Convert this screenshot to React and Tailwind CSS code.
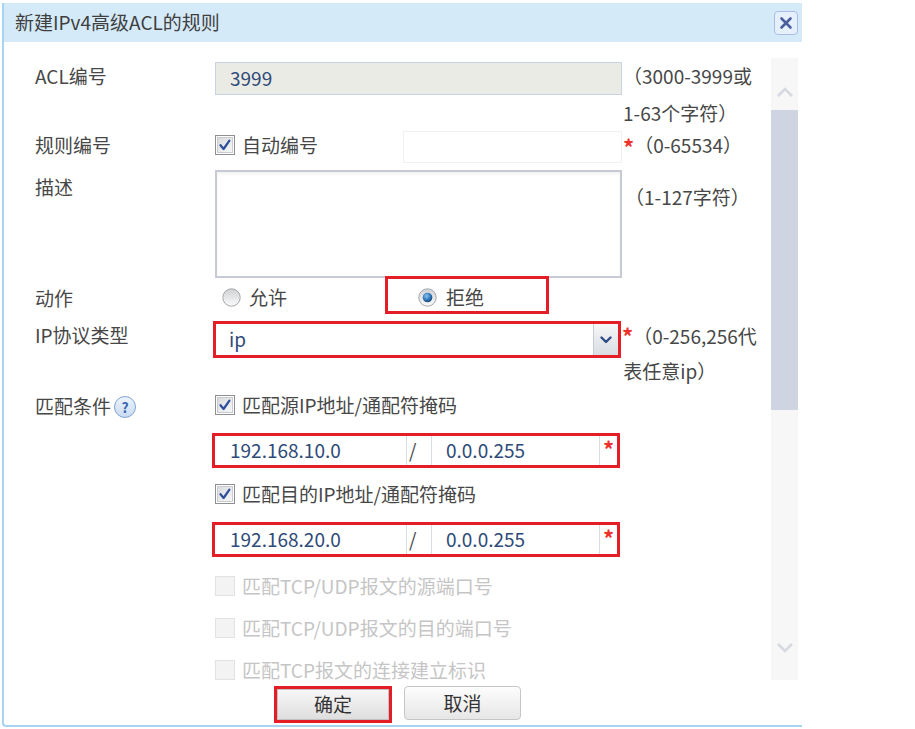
import React from "react";

const FONT = { fontFamily: '"Microsoft YaHei", "Noto Sans CJK SC", "Noto Sans", sans-serif' };

function CheckBox({ checked = false, disabled = false }) {
  if (disabled) {
    return (
      <span className="inline-block h-[20px] w-[20px] shrink-0 border border-[#e2e2e2] bg-[#f3f3f3]" />
    );
  }
  return (
    <svg width="20" height="20" viewBox="0 0 20 20" className="shrink-0">
      <defs>
        <linearGradient id="cbg" x1="0" y1="0" x2="1" y2="1">
          <stop offset="0" stopColor="#d9dadc" />
          <stop offset="1" stopColor="#f7f8f9" />
        </linearGradient>
      </defs>
      <rect x="0.5" y="0.5" width="19" height="19" fill="#fff" stroke="#8d8f92" />
      <rect x="2.5" y="2.5" width="15" height="15" fill="url(#cbg)" stroke="#c9cbce" />
      {checked && (
        <path d="M5.5 10.2 L8.6 14 L14.4 5.6" fill="none" stroke="#2f4f9a" strokeWidth="2.2" strokeLinecap="round" strokeLinejoin="round" />
      )}
    </svg>
  );
}

function Radio({ checked = false }) {
  return (
    <svg width="19" height="19" viewBox="0 0 19 19" className="shrink-0">
      <defs>
        <linearGradient id="rbg" x1="0" y1="0" x2="0" y2="1">
          <stop offset="0" stopColor="#cfd1d4" />
          <stop offset="1" stopColor="#fbfbfb" />
        </linearGradient>
        <radialGradient id="rdot" cx="0.4" cy="0.35" r="0.7">
          <stop offset="0" stopColor="#8cc3ee" />
          <stop offset="0.6" stopColor="#2c74b8" />
          <stop offset="1" stopColor="#1a3f6e" />
        </radialGradient>
      </defs>
      <circle cx="9.5" cy="9.5" r="8.7" fill="url(#rbg)" stroke="#a3a6aa" />
      {checked && <circle cx="9.5" cy="9.5" r="4.8" fill="url(#rdot)" />}
    </svg>
  );
}

function Star() {
  return <span className="text-[22px] font-bold leading-none text-[#f0302a]">*</span>;
}

function Label({ children, className = "" }) {
  return <div className={`w-[180px] shrink-0 text-[#474747] ${className}`}>{children}</div>;
}

function IpPair({ ip, mask }) {
  return (
    <div className="-ml-[3px] flex h-[35px] w-[408px] border-[3px] border-[#e51d26] bg-white">
      <div className="flex w-[192px] items-center border-r border-[#d7dce6] pl-[15px] text-[#2e4a78]">{ip}</div>
      <div className="flex w-[25px] items-start border-r border-[#d7dce6] pl-[2px] text-[#474747]">/</div>
      <div className="flex w-[168px] items-center border-r border-[#d7dce6] pl-[14px] text-[#2e4a78]">{mask}</div>
      <div className="flex flex-1 items-start justify-center pt-[1px]">
        <Star />
      </div>
    </div>
  );
}

function CheckRow({ text, checked, disabled, className = "" }) {
  return (
    <div className={`flex h-[30px] items-center pl-[180px] ${className}`}>
      <CheckBox checked={checked} disabled={disabled} />
      <span className={`ml-[7px] ${disabled ? "text-[#c5c5c5]" : "text-[#474747]"}`}>{text}</span>
    </div>
  );
}

export default function App() {
  return (
    <div className="relative h-[729px] w-[915px] overflow-hidden bg-white text-[19px]" style={FONT}>
      <div className="ml-[2px] mt-[3px] h-[724px] w-[800px] overflow-hidden rounded-bl-[4px] border-b-[2px] border-l-[2px] border-[#a7d5f1] bg-white">
        {/* title bar */}
        <div className="flex h-[39px] items-center justify-between bg-[#d4eaf9] pl-[11px] pr-[4px]">
          <span className="text-[19px] text-[#3f3f3f]">新建IPv4高级ACL的规则</span>
          <div className="flex h-[24px] w-[24px] items-center justify-center rounded-[4px] border border-[#a9bde6] bg-[#e6f0fc]">
            <svg width="14" height="14" viewBox="0 0 14 14">
              <path d="M2.5 2.5 L11.5 11.5 M11.5 2.5 L2.5 11.5" stroke="#4b5e9a" strokeWidth="2.6" strokeLinecap="round" />
            </svg>
          </div>
        </div>

        <div className="flex">
          {/* form */}
          <div className="w-[766px] shrink-0 pl-[31px] pt-[20px]">
            {/* ACL编号 */}
            <div className="flex h-[69px]">
              <Label className="leading-[27px]">ACL编号</Label>
              <div className="flex h-[33px] w-[407px] items-center border border-[#c9d2e2] bg-[#ebebe5] pl-[14px] text-[#2e4a78]">
                3999
              </div>
              <div className="-mt-[5px] ml-[1px] leading-[37px] text-[#474747]">
                <div>（3000-3999或</div>
                <div>1-63个字符）</div>
              </div>
            </div>

            {/* 规则编号 */}
            <div className="flex h-[34px] items-start">
              <Label className="leading-[28px]">规则编号</Label>
              <div className="flex h-[28px] w-[188px] items-center">
                <CheckBox checked />
                <span className="ml-[7px] text-[#474747]">自动编号</span>
              </div>
              <div className="h-[32px] w-[219px] border border-[#eef0f4] bg-white" />
              <div className="ml-[1px] flex items-start leading-[28px] text-[#474747]">
                <span className="pt-[3px]"><Star /></span>
                <span>（0-65534）</span>
              </div>
            </div>

            {/* 描述 */}
            <div className="mt-[5px] flex h-[108px]">
              <Label className="leading-[34px]">描述</Label>
              <div className="h-[108px] w-[407px] border-2 border-[#c6cad4] bg-white shadow-[inset_0_2px_3px_rgba(0,0,0,0.06)]" />
              <div className="ml-[3px] pt-[8px] leading-[37px] text-[#474747]">（1-127字符）</div>
            </div>

            {/* 动作 */}
            <div className="-mt-[2px] flex h-[38px] items-center">
              <Label className="mt-[6px]">动作</Label>
              <div className="ml-[7px] mt-[4px] flex w-[163px] items-center">
                <Radio />
                <span className="ml-[8px] text-[#474747]">允许</span>
              </div>
              <div className="flex h-[38px] w-[164px] items-center border-[3px] border-[#e51d26] pl-[30px] pt-[4px]">
                <Radio checked />
                <span className="ml-[9px] text-[#474747]">拒绝</span>
              </div>
            </div>

            {/* IP协议类型 */}
            <div className="mt-[7px] flex h-[69px]">
              <Label className="leading-[28px]">IP协议类型</Label>
              <div className="-ml-[2px] flex h-[37px] w-[408px] items-stretch border-[3px] border-[#e51d26] bg-white">
                <div className="flex flex-1 items-center pl-[13px] text-[#2e4a78]">ip</div>
                <div className="flex w-[25px] items-center justify-center border-l border-[#c5cbd6] bg-gradient-to-b from-[#f6f7f8] to-[#d9dce1]">
                  <svg width="12" height="8" viewBox="0 0 12 8">
                    <path d="M1.5 1.5 L6 6 L10.5 1.5" fill="none" stroke="#2f4b86" strokeWidth="2.4" strokeLinecap="round" strokeLinejoin="round" />
                  </svg>
                </div>
              </div>
              <div className="ml-[1px] flex items-start">
                <span className="pt-[2px]"><Star /></span>
                <div className="-ml-[10px] -mt-[3px] leading-[35px] text-[#474747]">
                  <div className="pl-[10px]">（0-256,256代</div>
                  <div>表任意ip）</div>
                </div>
              </div>
            </div>

            {/* 匹配条件 */}
            <div className="flex h-[30px] items-center">
              <Label className="mt-[3px] flex items-center">
                匹配条件
                <span className="ml-[3px] flex h-[22px] w-[22px] items-center justify-center rounded-full border border-[#7fa3d3] bg-gradient-to-b from-[#eef4fc] to-[#c9dbf2] text-[14px] font-bold leading-none text-[#3966ad]">
                  ?
                </span>
              </Label>
              <CheckBox checked />
              <span className="ml-[7px] text-[#474747]">匹配源IP地址/通配符掩码</span>
            </div>

            <div className="mt-[13px] flex">
              <div className="w-[180px] shrink-0" />
              <IpPair ip="192.168.10.0" mask="0.0.0.255" />
            </div>

            <CheckRow className="mt-[11px]" text="匹配目的IP地址/通配符掩码" checked />

            <div className="mt-[13px] flex">
              <div className="w-[180px] shrink-0" />
              <IpPair ip="192.168.20.0" mask="0.0.0.255" />
            </div>

            <CheckRow className="mt-[14px]" text="匹配TCP/UDP报文的源端口号" disabled />
            <CheckRow className="mt-[12px]" text="匹配TCP/UDP报文的目的端口号" disabled />
            <CheckRow className="mt-[12px]" text="匹配TCP报文的连接建立标识" disabled />

            {/* buttons */}
            <div className="mt-[1px] flex items-start pl-[239px]">
              <div className="flex h-[37px] w-[118px] items-stretch border-[3px] border-[#e51d26] bg-white">
                <button className="flex-1 border border-[#c2c2c2] bg-gradient-to-b from-[#f7f7f7] to-[#dedede] text-[19px] text-[#333]">
                  确定
                </button>
              </div>
              <button className="ml-[12px] h-[34px] w-[117px] rounded-[4px] border border-[#c6c6c6] bg-gradient-to-b from-[#fdfdfd] to-[#e6e6e6] text-[19px] text-[#333]">
                取消
              </button>
            </div>
          </div>

          {/* scrollbar */}
          <div className="ml-[1px] mt-[16px] flex h-[622px] w-[27px] flex-col bg-[#f7f7f8]">
            <div className="flex h-[52px] items-center justify-center pt-[16px]">
              <svg width="18" height="12" viewBox="0 0 18 12">
                <path d="M2 10 L9 3 L16 10" fill="none" stroke="#d6d9df" strokeWidth="2.6" />
              </svg>
            </div>
            <div className="h-[300px] bg-[#ced4e1]" />
            <div className="flex flex-1 items-end justify-center pb-[26px]">
              <svg width="18" height="12" viewBox="0 0 18 12">
                <path d="M2 2 L9 9 L16 2" fill="none" stroke="#d6d9df" strokeWidth="2.6" />
              </svg>
            </div>
          </div>
        </div>
      </div>
    </div>
  );
}
